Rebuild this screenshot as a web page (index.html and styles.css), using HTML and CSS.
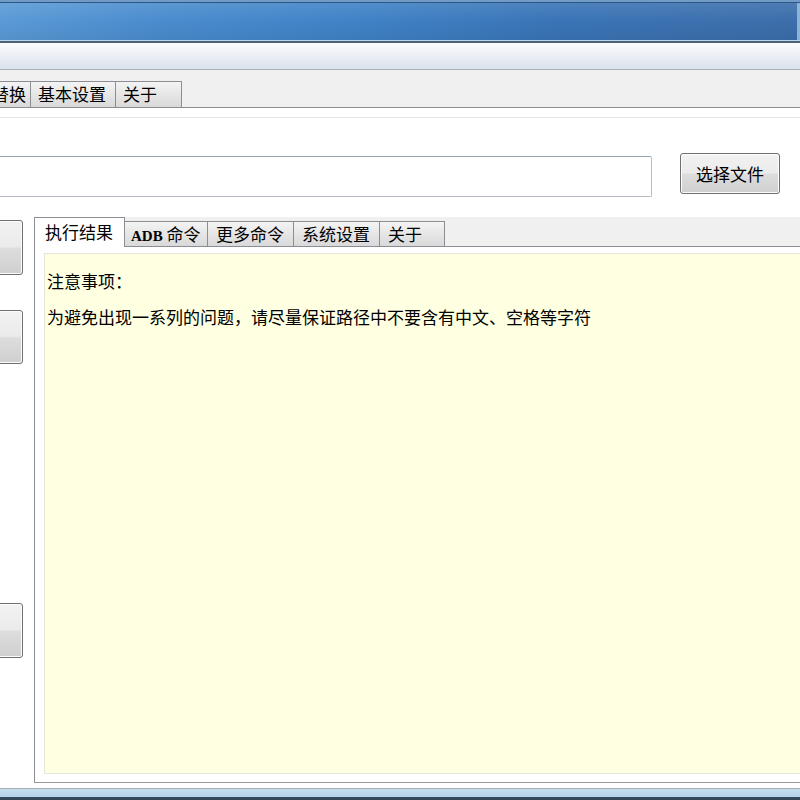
FILE: index.html
```html
<!DOCTYPE html>
<html lang="zh-CN">
<head>
  <meta charset="UTF-8" />
  <title>ADB 工具</title>
  <link rel="stylesheet" href="styles.css">
</head>
<body>
  <div class="window">
    <div class="titlebar"></div>
    <div class="menubar"></div>

    <div class="outer-tabs">
      <div class="otab otab-cut">替换</div>
      <div class="otab otab-basic">基本设置</div>
      <div class="otab otab-about">关于</div>
    </div>

    <div class="outer-page">
      <div class="file-row">
        <input class="file-path" type="text" value="">
        <button class="btn choose">选择文件</button>
      </div>

      <div class="main">
        <div class="side">
          <button class="btn side-btn first"></button>
          <button class="btn side-btn second"></button>
          <button class="btn side-btn third"></button>
        </div>

        <div class="tabctl">
          <div class="tabstrip">
            <div class="itab active t1">执行结果</div>
            <div class="itab t2"><span class="latin">ADB</span> 命令</div>
            <div class="itab t3">更多命令</div>
            <div class="itab t4">系统设置</div>
            <div class="itab t5">关于</div>
          </div>
          <div class="tabpage">
            <div class="output">
              <p>注意事项：</p>
              <p>为避免出现一系列的问题，请尽量保证路径中不要含有中文、空格等字符</p>
            </div>
          </div>
        </div>
      </div>
    </div>

    <div class="frame-bottom"></div>
  </div>
</body>
</html>
```

FILE: styles.css
```css
html, body {
  margin: 0;
  padding: 0;
}

body {
  width: 800px;
  height: 800px;
  overflow: hidden;
  font-family: "Noto Sans CJK SC", "Liberation Sans", sans-serif;
  font-size: 17px;
  color: #000;
  background: #fff;
}

.window {
  display: flex;
  flex-direction: column;
  height: 800px;
}

/* window chrome */
.titlebar {
  height: 38px;
  border-top: 2px solid #6f9bc6;
  border-bottom: 1px solid #b9d3ec;
  box-shadow: inset 0 1px 0 #2d5682, inset -3px 0 0 #8fb3d6;
  background:
    linear-gradient(to bottom, rgba(255,255,255,0.10), rgba(255,255,255,0) 50%, rgba(0,0,0,0.06)),
    linear-gradient(to right, #5a9ad6 0%, #4a8cce 20%, #3f82c6 45%, #3a74b6 70%, #3c6eab 100%);
}

.menubar {
  height: 26px;
  border-top: 2px solid #4a6178;
  border-bottom: 1px solid #a9b1ba;
  background: linear-gradient(to bottom, #fbfcfd 0%, #eef1f6 40%, #dbe2ec 100%);
}

/* outer tab control */
.outer-tabs {
  display: flex;
  align-items: flex-end;
  height: 37px;
  background: #f0f0f0;
  border-bottom: 1px solid #8a8d93;
}

.otab {
  box-sizing: border-box;
  height: 26px;
  line-height: 24px;
  padding-left: 7px;
  border: 1px solid #8c8e94;
  border-bottom: none;
  margin-right: -1px;
  background: linear-gradient(to bottom, #f4f4f4, #e6e6e6 50%, #d9d9d9);
  white-space: nowrap;
}

.otab-cut {
  width: 70px;
  margin-left: -39px;
  padding-left: 30px;
}

.otab-basic {
  width: 86px;
}

.otab-about {
  width: 67px;
}

.outer-page {
  flex: 1;
  display: flex;
  flex-direction: column;
  padding-top: 9px;
  background: #fff;
}

.file-row {
  display: flex;
  align-items: flex-start;
  border-top: 1px solid #e4e4e4;
  padding-top: 35px;
}

.file-path {
  box-sizing: border-box;
  width: 700px;
  height: 41px;
  margin: 3px 0 0 -48px;
  border: 1px solid #b5bcc3;
  border-top-color: #8ea6b8;
  border-radius: 2px;
  background: #fff;
}

.btn {
  box-sizing: border-box;
  border: 1px solid #707070;
  border-radius: 3px;
  background: linear-gradient(to bottom, #f2f2f2 0%, #ebebeb 48%, #dddddd 52%, #cfcfcf 100%);
  box-shadow: inset 0 0 0 1px #fcfcfc;
  font-family: inherit;
  font-size: 17px;
  color: #000;
  padding: 0;
}

.choose {
  width: 100px;
  height: 41px;
  margin-left: 28px;
}

/* lower area */
.main {
  flex: 1;
  display: flex;
  margin-top: 20px;
}

.side {
  position: relative;
  width: 23px;
  flex: none;
}

.side-btn {
  display: block;
  width: 60px;
  margin-left: -37px;
}

.side-btn.first {
  height: 55px;
  margin-top: 3px;
}

.side-btn.second {
  height: 54px;
  margin-top: 35px;
}

.side-btn.third {
  height: 55px;
  margin-top: 239px;
}

.tabctl {
  flex: 1;
  display: flex;
  flex-direction: column;
  margin-left: 11px;
  margin-right: -40px;
}

.tabstrip {
  display: flex;
  align-items: flex-end;
  height: 29px;
  background: #f0f0f0;
  border-bottom: 1px solid #8a8d93;
}

.itab {
  box-sizing: border-box;
  height: 25px;
  line-height: 23px;
  padding-left: 8px;
  border: 1px solid #8c8e94;
  border-bottom: none;
  margin-right: -1px;
  background: linear-gradient(to bottom, #f4f4f4, #e6e6e6 50%, #d9d9d9);
  white-space: nowrap;
}

.itab.active {
  height: 30px;
  line-height: 28px;
  margin-bottom: -1px;
  padding-left: 10px;
  background: #fff;
  position: relative;
}

.t1 { width: 91px; }
.t2 { width: 84px; padding-left: 6px; }
.t3 { width: 87px; }
.t4 { width: 87px; }
.t5 { width: 66px; }

.latin {
  font-family: "Liberation Serif", serif;
  font-weight: bold;
  font-size: 15px;
}

.tabpage {
  flex: 1;
  display: flex;
  padding: 6px 0 8px 9px;
  border-left: 1px solid #8c8e94;
  border-bottom: 1px solid #9a9a9a;
  background: #fff;
}

.output {
  flex: 1;
  padding: 9px 0 0 2px;
  border: 1px solid #e6e6d8;
  background: #ffffe1;
}

.output p {
  margin: 0;
  line-height: 36px;
  white-space: nowrap;
}

.frame-bottom {
  height: 12px;
  border-top: 5px solid #fff;
  box-sizing: content-box;
  background: linear-gradient(to bottom, #a9aeb3 0, #a9aeb3 1px, #c3dcef 1px, #b6d2ea 9px, #34485a 9px);
}
```
